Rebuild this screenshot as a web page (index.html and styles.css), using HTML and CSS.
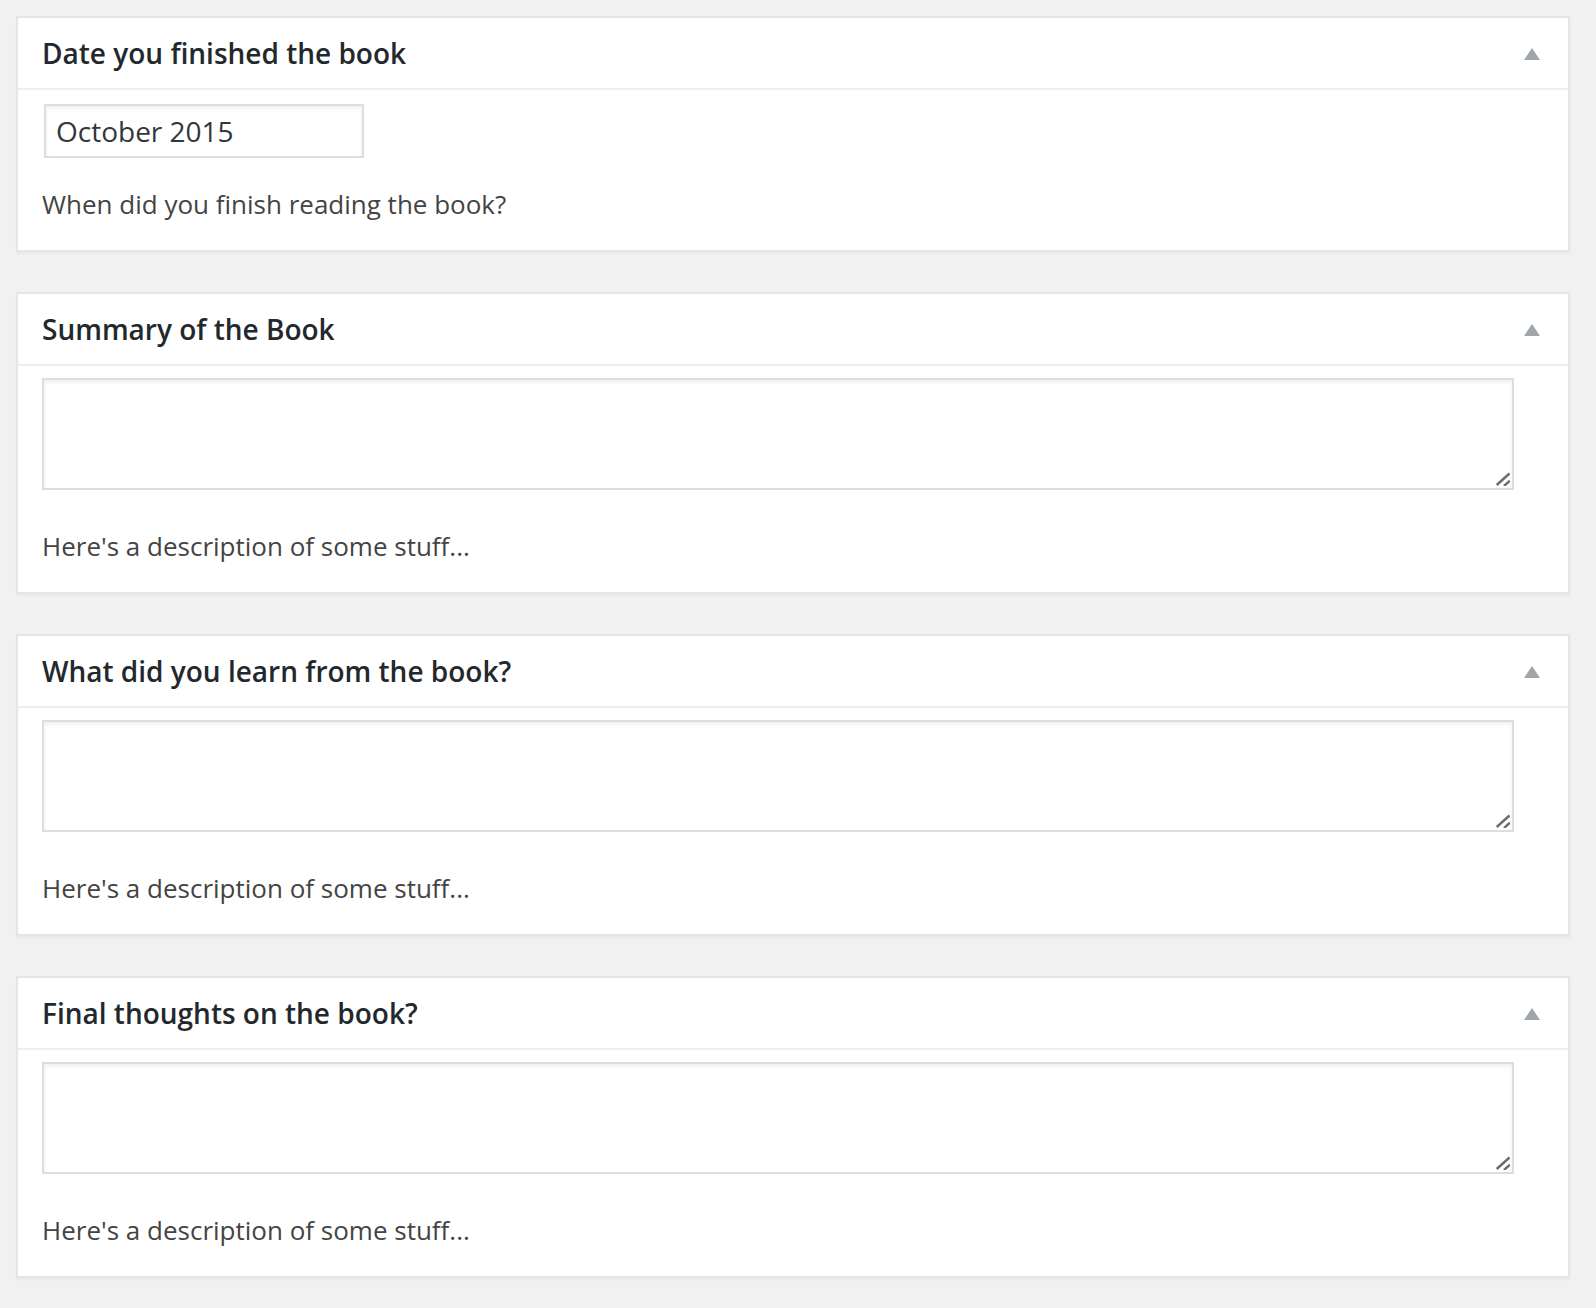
FILE: index.html
```html
<!DOCTYPE html>
<html lang="en">
<head>
<meta charset="utf-8">
<title>Book review fields</title>
<link rel="stylesheet" href="styles.css">
</head>
<body>
<div class="wrap">
  <section class="postbox">
    <div class="hndle">
      <h2 class="title">Date you finished the book</h2>
      <svg class="toggle" width="16" height="12" viewBox="0 0 16 12"><polygon points="8,0 16,12 0,12" fill="#a0a5aa"/></svg>
    </div>
    <div class="inside inside-date">
      <input class="text-input" type="text" value="October 2015">
      <p class="description desc-date">When did you finish reading the book?</p>
    </div>
  </section>

  <section class="postbox">
    <div class="hndle">
      <h2 class="title">Summary of the Book</h2>
      <svg class="toggle" width="16" height="12" viewBox="0 0 16 12"><polygon points="8,0 16,12 0,12" fill="#a0a5aa"/></svg>
    </div>
    <div class="inside">
      <div class="area-wrap">
        <textarea class="area"></textarea>
        <svg class="grip" width="16" height="16" viewBox="0 0 16 16"><line x1="2.7" y1="15" x2="15.5" y2="3.5"/><line x1="10" y1="16" x2="16" y2="10.7"/></svg>
      </div>
      <p class="description">Here's a description of some stuff...</p>
    </div>
  </section>

  <section class="postbox">
    <div class="hndle">
      <h2 class="title">What did you learn from the book?</h2>
      <svg class="toggle" width="16" height="12" viewBox="0 0 16 12"><polygon points="8,0 16,12 0,12" fill="#a0a5aa"/></svg>
    </div>
    <div class="inside">
      <div class="area-wrap">
        <textarea class="area"></textarea>
        <svg class="grip" width="16" height="16" viewBox="0 0 16 16"><line x1="2.7" y1="15" x2="15.5" y2="3.5"/><line x1="10" y1="16" x2="16" y2="10.7"/></svg>
      </div>
      <p class="description">Here's a description of some stuff...</p>
    </div>
  </section>

  <section class="postbox">
    <div class="hndle">
      <h2 class="title">Final thoughts on the book?</h2>
      <svg class="toggle" width="16" height="12" viewBox="0 0 16 12"><polygon points="8,0 16,12 0,12" fill="#a0a5aa"/></svg>
    </div>
    <div class="inside">
      <div class="area-wrap">
        <textarea class="area"></textarea>
        <svg class="grip" width="16" height="16" viewBox="0 0 16 16"><line x1="2.7" y1="15" x2="15.5" y2="3.5"/><line x1="10" y1="16" x2="16" y2="10.7"/></svg>
      </div>
      <p class="description">Here's a description of some stuff...</p>
    </div>
  </section>
</div>
</body>
</html>
```

FILE: styles.css
```css
html, body {
  margin: 0;
  padding: 0;
  background: #f1f1f1;
}

body {
  font-family: "Open Sans", "Noto Sans", "Liberation Sans", sans-serif;
  color: #444;
}

.wrap {
  padding: 16px 26px 16px 16px;
  display: flex;
  flex-direction: column;
  gap: 40px;
}

.postbox {
  background: #fff;
  border: 2px solid #e5e5e5;
  box-shadow: 0 2px 2px rgba(0, 0, 0, 0.04);
}

.hndle {
  height: 70px;
  padding: 0 28px 0 24px;
  display: flex;
  align-items: center;
  justify-content: space-between;
  border-bottom: 2px solid #eee;
}

.title {
  margin: 0;
  font-size: 28px;
  line-height: 38px;
  font-weight: 600;
  color: #23282d;
}

.toggle {
  display: block;
  margin-top: 2px;
}

.inside {
  padding: 12px 22px 26px 24px;
  display: flex;
  flex-direction: column;
  align-items: flex-start;
}

.inside-date {
  padding-top: 14px;
  padding-bottom: 26px;
}

.text-input {
  box-sizing: border-box;
  width: 320px;
  height: 54px;
  margin: 0 0 0 2px;
  padding: 0 10px;
  border: 2px solid #ddd;
  box-shadow: inset 0 2px 4px rgba(0, 0, 0, 0.07);
  background: #fff;
  font-family: inherit;
  font-size: 28px;
  line-height: 38px;
  color: #32373c;
  outline: none;
}

.area-wrap {
  position: relative;
  width: 1472px;
  height: 112px;
}

.area {
  box-sizing: border-box;
  display: block;
  width: 100%;
  height: 100%;
  margin: 0;
  padding: 4px 8px;
  border: 2px solid #ddd;
  box-shadow: inset 0 2px 4px rgba(0, 0, 0, 0.07);
  background: #fff;
  font-family: inherit;
  font-size: 28px;
  color: #32373c;
  resize: none;
  outline: none;
}

.grip {
  position: absolute;
  right: 4px;
  bottom: 4px;
  pointer-events: none;
}

.grip line {
  stroke: #6b6b6b;
  stroke-width: 2.4;
}

.description {
  margin: 37px 0 0 -2px;
  font-size: 26px;
  line-height: 39px;
  color: #444;
}

.inside .description {
  margin-left: 0;
}

.desc-date {
  margin-top: 27px;
}
```
